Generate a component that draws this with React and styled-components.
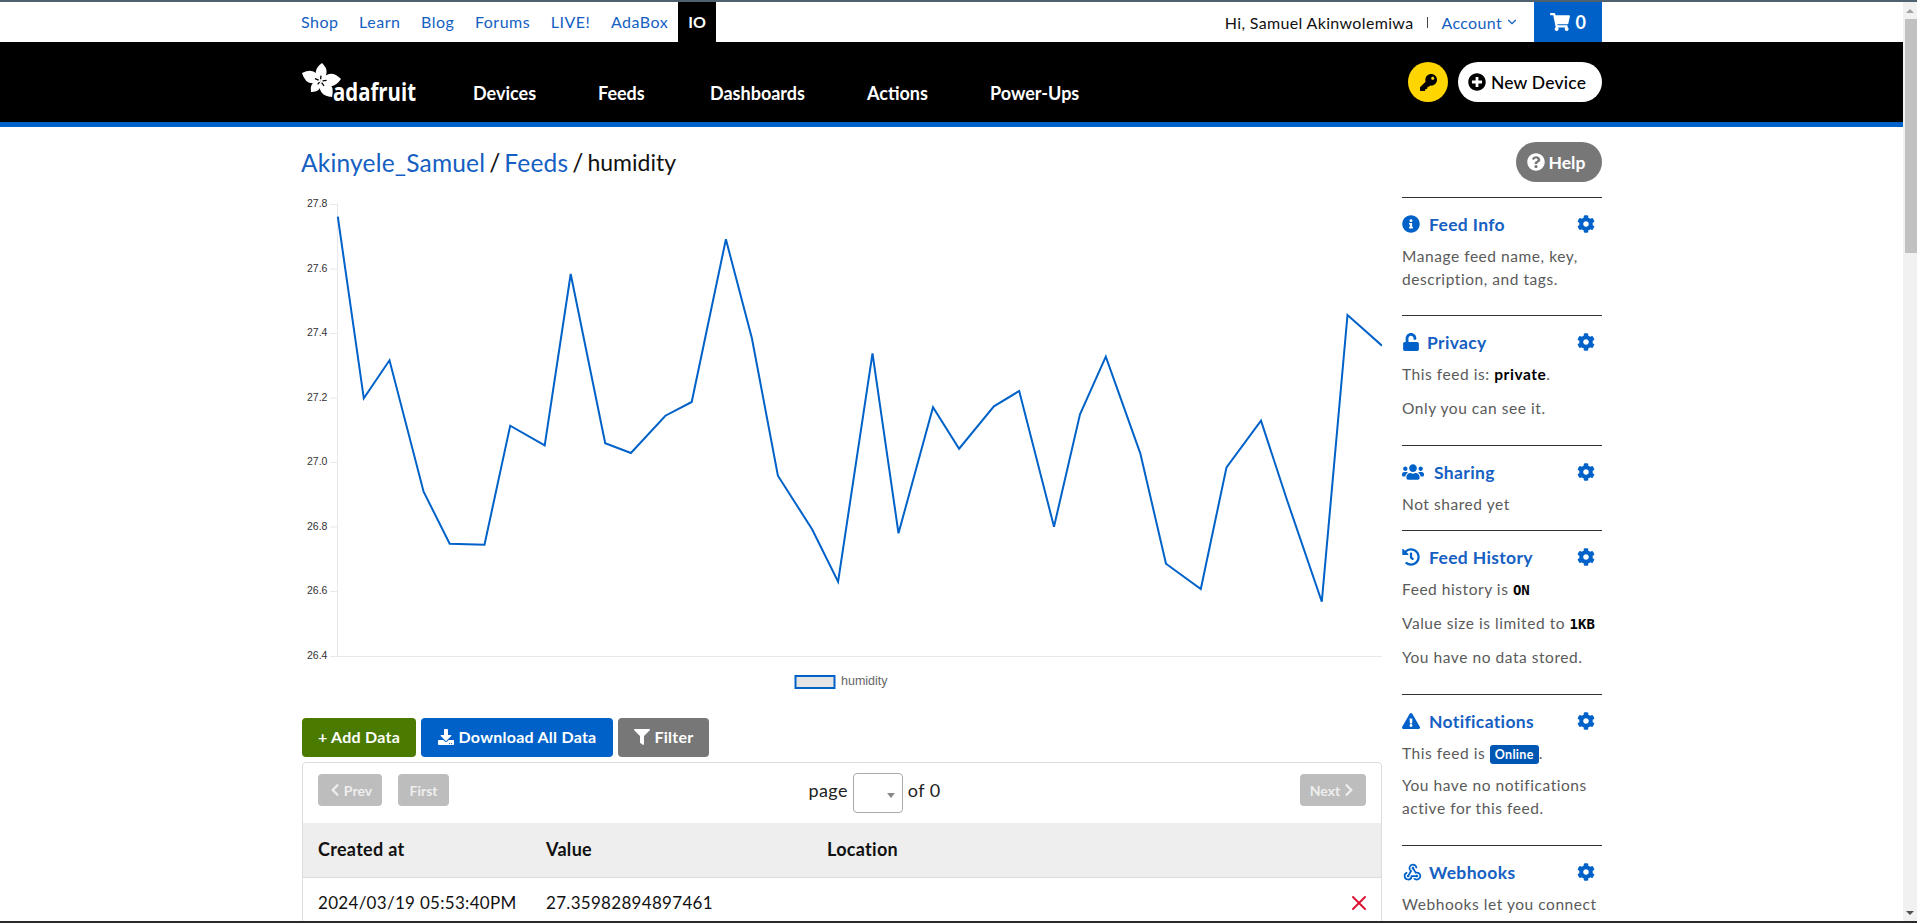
import React from "react";
import styled, { createGlobalStyle } from "styled-components";
import {
    FaCog,
    FaDownload,
    FaExclamationTriangle,
    FaFilter,
    FaHistory,
    FaInfoCircle,
    FaKey,
    FaPlusCircle,
    FaQuestionCircle,
    FaShoppingCart,
    FaUnlock,
    FaUsers,
    FaChevronLeft,
    FaChevronRight,
} from "react-icons/fa";
import { FiChevronDown, FiX } from "react-icons/fi";
import { MdOutlineWebhook } from "react-icons/md";

const BLUE = "#0062c8";
const LINK = "#1560c2";
const FONT = `"Lato", "Open Sans", sans-serif`;

const GlobalStyle = createGlobalStyle`
    html, body {
        margin: 0;
        padding: 0;
        overflow: hidden;
        background: #fff;
    }
    body {
        font-family: ${FONT};
        color: #111;
    }
`;

const Shell = styled.div`
    height: 923px;
    display: flex;
    flex-direction: column;
    overflow: hidden;
`;

const TopEdge = styled.div`
    height: 2px;
    flex: none;
    background: #4d626e;
`;

const BottomEdge = styled.div`
    height: 2px;
    flex: none;
    background: #2a2a2a;
`;

const Viewport = styled.div`
    flex: 1;
    min-height: 0;
    display: flex;
`;

const Page = styled.div`
    flex: 1;
    min-width: 0;
    overflow: hidden;
`;

const ScrollTrack = styled.div`
    width: 14px;
    flex: none;
    background: #f1f1f1;
    display: flex;
    flex-direction: column;
    align-items: flex-end;
`;

const ScrollArrow = styled.div`
    width: 14px;
    height: 17px;
    flex: none;
    display: flex;
    align-items: center;
    justify-content: center;
    margin-top: ${({ $down }) => ($down ? "auto" : "0")};

    &::before {
        content: "";
        border-left: 4px solid transparent;
        border-right: 4px solid transparent;
        ${({ $down }) =>
            $down ? "border-top: 4px solid #505050;" : "border-bottom: 4px solid #a3a3a3;"}
    }
`;

const ScrollThumb = styled.div`
    width: 12px;
    height: 234px;
    background: #c1c1c1;
`;

const TopBar = styled.div`
    height: 40px;
    background: #fff;
`;

const Inner = styled.div`
    width: 1301px;
    margin: 0 auto;
    display: flex;
    justify-content: space-between;
    align-items: ${({ $align }) => $align || "stretch"};
    height: 100%;
`;

const TopLinks = styled.nav`
    display: flex;
    align-items: stretch;
`;

const TopLink = styled.a`
    display: flex;
    align-items: center;
    padding-bottom: 2px;
    font-size: 16px;
    color: ${LINK};
    margin-right: 20.6px;
    letter-spacing: 0.5px;

    &:nth-last-child(2) {
        margin-right: 10px;
    }
`;

const ActiveTopLink = styled.a`
    display: flex;
    align-items: center;
    padding: 0 10px 2px;
    font-size: 16px;
    font-weight: 700;
    color: #fff;
    background: #000;
`;

const UserArea = styled.div`
    display: flex;
    align-items: center;
    font-size: 16px;
    letter-spacing: 0.34px;
`;

const Divider = styled.span`
    width: 1px;
    height: 11px;
    background: #444;
    margin: 0 13px 0 14px;
`;

const AccountLink = styled.a`
    color: ${LINK};
    display: flex;
    align-items: center;
    gap: 3px;
    margin-right: 15px;
`;

const CartBox = styled.div`
    width: 68px;
    align-self: stretch;
    background: ${BLUE};
    color: #fff;
    display: flex;
    align-items: center;
    justify-content: center;
    gap: 6px;
    font-size: 18px;
    font-weight: 700;
`;

const MainNav = styled.div`
    height: 80px;
    background: #000;
    border-bottom: 5px solid ${BLUE};
`;

const NavLeft = styled.div`
    display: flex;
    align-items: center;
`;

const NavLink = styled.a`
    color: #fff;
    font-size: 18px;
    font-weight: 700;
    padding-top: 22px;
    width: ${({ $w }) => $w}px;
    margin-left: ${({ $ml }) => $ml || 0}px;
`;

const NavRight = styled.div`
    display: flex;
    align-items: center;
    gap: 10px;
`;

const KeyButton = styled.div`
    width: 40px;
    height: 40px;
    border-radius: 50%;
    background: #ffd500;
    color: #000;
    display: flex;
    align-items: center;
    justify-content: center;
    font-size: 17px;
`;

const NewDeviceButton = styled.div`
    width: 144px;
    height: 40px;
    box-sizing: border-box;
    border-radius: 20px;
    background: #fff;
    color: #000;
    display: flex;
    align-items: center;
    justify-content: center;
    gap: 5px;
    padding-right: 6px;
    font-size: 17.5px;
    font-weight: 500;
    letter-spacing: 0.2px;
`;

const LogoSvg = styled.svg`
    display: block;
    overflow: visible;
`;

const Content = styled.div`
    width: 1301px;
    margin: 0 auto;
    display: flex;
    gap: 20px;
    padding-top: 15px;
`;

const Main = styled.main`
    width: 1081px;
    flex: none;
`;

const Breadcrumb = styled.div`
    height: 40px;
    display: flex;
    align-items: center;
    font-size: 24.5px;
    gap: 4px;
    color: #111;
`;

const CrumbLink = styled.a`
    color: ${LINK};
    letter-spacing: 0.2px;
`;

const CrumbCurrent = styled.span`
    font-size: 23px;
`;

const ChartSvg = styled.svg`
    display: block;
    width: 1081px;
    height: 536px;
`;

const ActionRow = styled.div`
    display: flex;
    gap: 5px;
`;

const ActionButton = styled.div`
    height: 39px;
    box-sizing: border-box;
    padding-bottom: 2px;
    width: ${({ $w }) => $w}px;
    margin-left: ${({ $first }) => ($first ? "1px" : "0")};
    border-radius: 4px;
    background: ${({ $bg }) => $bg};
    color: #fff;
    display: flex;
    align-items: center;
    justify-content: center;
    gap: 5px;
    font-size: 16px;
    font-weight: 700;
    letter-spacing: 0.25px;
`;

const TableCard = styled.section`
    margin: 5px 0 0 1px;
    border: 1px solid #ddd;
    border-radius: 4px;
`;

const Pager = styled.div`
    display: flex;
    justify-content: space-between;
    align-items: flex-start;
    height: 60px;
    box-sizing: border-box;
    padding: 10px 15px 0;
`;

const PagerGroup = styled.div`
    display: flex;
    gap: 16px;
`;

const PagerButton = styled.div`
    margin-top: 1px;
    height: 32px;
    width: ${({ $w }) => $w}px;
    border-radius: 4px;
    background: #bdbdbd;
    color: #eee;
    display: flex;
    align-items: center;
    justify-content: center;
    gap: 2px;
    font-size: 14px;
    font-weight: 700;
`;

const PageSelectRow = styled.div`
    display: flex;
    align-items: center;
    gap: 5px;
    font-size: 18px;
    color: #222;
    letter-spacing: 0.4px;
`;

const PageLabel = styled.span`
    padding-bottom: 6px;
`;

const PageSelect = styled.div`
    width: 50px;
    height: 40px;
    box-sizing: border-box;
    border: 1px solid #aaa;
    border-radius: 4px;
    display: flex;
    align-items: center;
    justify-content: flex-end;
    padding: 4px 7px 0 0;

    &::after {
        content: "";
        border-left: 4px solid transparent;
        border-right: 4px solid transparent;
        border-top: 5px solid #888;
    }
`;

const Row = styled.div`
    display: grid;
    grid-template-columns: 228px 281px 1fr 34px;
    padding-left: 15px;
    padding-bottom: ${({ $head }) => ($head ? "3px" : "1px")};
    box-sizing: border-box;
    align-items: center;
    font-size: ${({ $head }) => ($head ? "18px" : "17px")};
    letter-spacing: 0.3px;
    height: ${({ $head }) => ($head ? "55px" : "50px")};
    background: ${({ $head }) => ($head ? "#eee" : "#fff")};
    border-bottom: ${({ $head }) => ($head ? "1px solid #ddd" : "none")};
    font-weight: ${({ $head }) => ($head ? 700 : 400)};
    color: #111;
`;

const DeleteCell = styled.div`
    color: #dc1432;
    display: flex;
`;

const Sidebar = styled.aside`
    width: 200px;
    flex: none;
`;

const HelpRow = styled.div`
    display: flex;
    justify-content: flex-end;
    margin-bottom: 15px;
`;

const HelpButton = styled.div`
    width: 86px;
    height: 40px;
    box-sizing: border-box;
    padding-right: 6px;
    border-radius: 20px;
    background: #777;
    color: #fff;
    display: flex;
    align-items: center;
    justify-content: center;
    gap: 4px;
    font-size: 17.5px;
    font-weight: 700;
`;

const Panel = styled.section`
    border-top: 1px solid #333;
    padding: 15px 0 ${({ $pb }) => $pb}px;
`;

const PanelHead = styled.div`
    height: 22px;
    display: flex;
    align-items: center;
    padding-right: 7px;
    color: ${LINK};
    font-size: 17.5px;
    font-weight: 700;
    letter-spacing: 0.35px;
    margin-bottom: 10px;
`;

const HeadIcon = styled.span`
    width: ${({ $w }) => $w}px;
    flex: none;
    display: flex;
    color: ${BLUE};
    font-size: 18px;
`;

const GearIcon = styled.span`
    margin-left: auto;
    display: flex;
    color: ${BLUE};
    font-size: 18px;
`;

const PanelText = styled.p`
    margin: 0 0 ${({ $mb }) => $mb ?? 11}px;
    font-size: 15.5px;
    line-height: 23px;
    color: #5a5a5a;
    letter-spacing: 0.55px;
    white-space: nowrap;
`;

const Strong = styled.strong`
    color: #000;
    font-weight: 700;
`;

const Code = styled.code`
    color: #000;
    font-family: "DejaVu Sans Mono", "Liberation Mono", monospace;
    font-weight: 700;
    font-size: 14px;
    line-height: 1;
    letter-spacing: 0;
`;

const OnlineBadge = styled.span`
    display: inline-block;
    vertical-align: middle;
    margin: -3px 0 -1px;
    background: #0056b3;
    color: #fff;
    font-size: 12.5px;
    font-weight: 700;
    line-height: 19px;
    padding: 0 5px;
    border-radius: 3px;
    letter-spacing: 0.3px;
`;

const LOGO_TIPS = [
    [21, 3],
    [40, 19],
    [31, 37],
    [10, 32],
    [1, 13],
];
const LOGO_CENTER = [19.5, 21];

function petal([tx, ty]) {
    const [cx, cy] = LOGO_CENTER;
    const mx = (cx + tx) / 2;
    const my = (cy + ty) / 2;
    const px = (ty - cy) * 0.6;
    const py = (cx - tx) * 0.6;
    return `M${cx} ${cy}Q${mx + px} ${my + py} ${tx} ${ty}Q${mx - px} ${my - py} ${cx} ${cy}Z`;
}

const Logo = () => (
    <LogoSvg width="116" height="52" viewBox="0 -4 116 52">
        {LOGO_TIPS.map((tip) => (
            <path key={tip.join()} d={petal(tip)} fill="#fff" />
        ))}
        {LOGO_TIPS.map(([tx, ty]) => (
            <line
                key={`${tx}-${ty}`}
                x1={LOGO_CENTER[0] + (tx - LOGO_CENTER[0]) * 0.1}
                y1={LOGO_CENTER[1] + (ty - LOGO_CENTER[1]) * 0.1}
                x2={LOGO_CENTER[0] + (tx - LOGO_CENTER[0]) * 0.3}
                y2={LOGO_CENTER[1] + (ty - LOGO_CENTER[1]) * 0.3}
                stroke="#000"
                strokeWidth="1.3"
            />
        ))}
        <text
            x="32"
            y="41"
            fill="#fff"
            fontFamily="'Open Sans', sans-serif"
            fontWeight="700"
            fontSize="25"
            textLength="83"
            lengthAdjust="spacingAndGlyphs"
        >
            adafruit
        </text>
    </LogoSvg>
);

const POINTS = [
    [337.8, 216.7], [363.8, 398.3], [389.5, 360.3], [423.6, 491.7], [449.7, 543.7],
    [484.5, 544.7], [510.2, 425.7], [544.7, 445.3], [570.7, 274], [605.2, 443.3],
    [630.9, 453], [665.4, 415.7], [691.7, 402], [725.9, 239.3], [751.9, 338.3],
    [777.9, 475.7], [812.1, 529.3], [838.1, 581.7], [872.5, 353.3], [898.5, 533.3],
    [933, 407.3], [959.1, 448.7], [993.9, 406.3], [1019.2, 391], [1054, 526.7],
    [1080, 414.3], [1105.8, 356.7], [1140.3, 453.3], [1166, 563.7], [1200.8, 589],
    [1226.5, 467.3], [1261, 420.7], [1287, 500], [1321.8, 601.7], [1347.5, 315],
    [1382, 345.7],
];

const TICKS = [
    ["27.8", 204],
    ["27.6", 268.5],
    ["27.4", 333],
    ["27.2", 397.5],
    ["27.0", 462],
    ["26.8", 526.5],
    ["26.6", 591],
    ["26.4", 656],
];

const Chart = () => (
    <ChartSvg viewBox="301 182 1081 536">
        <line x1="337.5" y1="204" x2="337.5" y2="656" stroke="#e8e8e8" />
        {TICKS.map(([label, y]) => (
            <g key={label}>
                <line x1="330" y1={y + 0.5} x2={label === "26.4" ? 1382 : 337} y2={y + 0.5} stroke="#e8e8e8" />
                <text
                    x="307"
                    y={y + 3}
                    fontFamily="'Liberation Sans', sans-serif"
                    fontSize="10.5"
                    fill="#333"
                >
                    {label}
                </text>
            </g>
        ))}
        <polyline
            points={POINTS.map((p) => p.join(",")).join(" ")}
            fill="none"
            stroke={BLUE}
            strokeWidth="2"
        />
        <rect x="795.5" y="676" width="39" height="12" fill="#e4e4e4" stroke={BLUE} strokeWidth="2" />
        <text x="841" y="684.5" fontFamily="'Liberation Sans', sans-serif" fontSize="12.5" fill="#666">
            humidity
        </text>
    </ChartSvg>
);

const Section = ({ icon, iconW, title, pb, children }) => (
    <Panel $pb={pb}>
        <PanelHead>
            <HeadIcon $w={iconW}>{icon}</HeadIcon>
            {title}
            <GearIcon>
                <FaCog />
            </GearIcon>
        </PanelHead>
        {children}
    </Panel>
);

export default function App() {
    return (
        <>
            <GlobalStyle />
            <Shell>
                <TopEdge />
                <Viewport>
                    <Page>
                        <TopBar>
                            <Inner>
                                <TopLinks>
                                    <TopLink>Shop</TopLink>
                                    <TopLink>Learn</TopLink>
                                    <TopLink>Blog</TopLink>
                                    <TopLink>Forums</TopLink>
                                    <TopLink>LIVE!</TopLink>
                                    <TopLink>AdaBox</TopLink>
                                    <ActiveTopLink>IO</ActiveTopLink>
                                </TopLinks>
                                <UserArea>
                                    Hi, Samuel Akinwolemiwa
                                    <Divider />
                                    <AccountLink>
                                        Account <FiChevronDown size={14} />
                                    </AccountLink>
                                    <CartBox>
                                        <FaShoppingCart size={20} /> 0
                                    </CartBox>
                                </UserArea>
                            </Inner>
                        </TopBar>
                        <MainNav>
                            <Inner $align="center">
                                <NavLeft>
                                    <Logo />
                                    <NavLink $w={125} $ml={56}>
                                        Devices
                                    </NavLink>
                                    <NavLink $w={112}>Feeds</NavLink>
                                    <NavLink $w={157}>Dashboards</NavLink>
                                    <NavLink $w={123}>Actions</NavLink>
                                    <NavLink>Power-Ups</NavLink>
                                </NavLeft>
                                <NavRight>
                                    <KeyButton>
                                        <FaKey />
                                    </KeyButton>
                                    <NewDeviceButton>
                                        <FaPlusCircle size={18} /> New Device
                                    </NewDeviceButton>
                                </NavRight>
                            </Inner>
                        </MainNav>
                        <Content>
                            <Main>
                                <Breadcrumb>
                                    <CrumbLink>Akinyele_Samuel</CrumbLink>/<CrumbLink>Feeds</CrumbLink>/
                                    <CrumbCurrent>humidity</CrumbCurrent>
                                </Breadcrumb>
                                <Chart />
                                <ActionRow>
                                    <ActionButton $first $w={114} $bg="#4a7a00">
                                        + Add Data
                                    </ActionButton>
                                    <ActionButton $w={192} $bg={BLUE}>
                                        <FaDownload /> Download All Data
                                    </ActionButton>
                                    <ActionButton $w={91} $bg="#777">
                                        <FaFilter /> Filter
                                    </ActionButton>
                                </ActionRow>
                                <TableCard>
                                    <Pager>
                                        <PagerGroup>
                                            <PagerButton $w={64}>
                                                <FaChevronLeft size={14} /> Prev
                                            </PagerButton>
                                            <PagerButton $w={51}>First</PagerButton>
                                        </PagerGroup>
                                        <PageSelectRow>
                                            <PageLabel>page</PageLabel>
                                            <PageSelect />
                                            <PageLabel>of 0</PageLabel>
                                        </PageSelectRow>
                                        <PagerButton $w={66}>
                                            Next <FaChevronRight size={14} />
                                        </PagerButton>
                                    </Pager>
                                    <Row $head>
                                        <span>Created at</span>
                                        <span>Value</span>
                                        <span>Location</span>
                                    </Row>
                                    <Row>
                                        <span>2024/03/19 05:53:40PM</span>
                                        <span>27.35982894897461</span>
                                        <span />
                                        <DeleteCell>
                                            <FiX size={24} />
                                        </DeleteCell>
                                    </Row>
                                </TableCard>
                            </Main>
                            <Sidebar>
                                <HelpRow>
                                    <HelpButton>
                                        <FaQuestionCircle size={18} /> Help
                                    </HelpButton>
                                </HelpRow>
                                <Section icon={<FaInfoCircle />} iconW={27} title="Feed Info" pb={13}>
                                    <PanelText>
                                        Manage feed name, key,
                                        <br />
                                        description, and tags.
                                    </PanelText>
                                </Section>
                                <Section icon={<FaUnlock />} iconW={25} title="Privacy" pb={14}>
                                    <PanelText>
                                        This feed is: <Strong>private</Strong>.
                                    </PanelText>
                                    <PanelText>Only you can see it.</PanelText>
                                </Section>
                                <Section icon={<FaUsers size={22} />} iconW={32} title="Sharing" pb={3}>
                                    <PanelText>Not shared yet</PanelText>
                                </Section>
                                <Section icon={<FaHistory />} iconW={27} title="Feed History" pb={14}>
                                    <PanelText>
                                        Feed history is <Code>ON</Code>
                                    </PanelText>
                                    <PanelText>
                                        Value size is limited to <Code>1KB</Code>
                                    </PanelText>
                                    <PanelText>You have no data stored.</PanelText>
                                </Section>
                                <Section
                                    icon={<FaExclamationTriangle />}
                                    iconW={27}
                                    title="Notifications"
                                    pb={14}
                                >
                                    <PanelText $mb={9}>
                                        This feed is <OnlineBadge>Online</OnlineBadge>.
                                    </PanelText>
                                    <PanelText>
                                        You have no notifications
                                        <br />
                                        active for this feed.
                                    </PanelText>
                                </Section>
                                <Section
                                    icon={<MdOutlineWebhook size={21} />}
                                    iconW={27}
                                    title="Webhooks"
                                    pb={12}
                                >
                                    <PanelText>Webhooks let you connect</PanelText>
                                </Section>
                            </Sidebar>
                        </Content>
                    </Page>
                    <ScrollTrack>
                        <ScrollArrow />
                        <ScrollThumb />
                        <ScrollArrow $down />
                    </ScrollTrack>
                </Viewport>
                <BottomEdge />
            </Shell>
        </>
    );
}
